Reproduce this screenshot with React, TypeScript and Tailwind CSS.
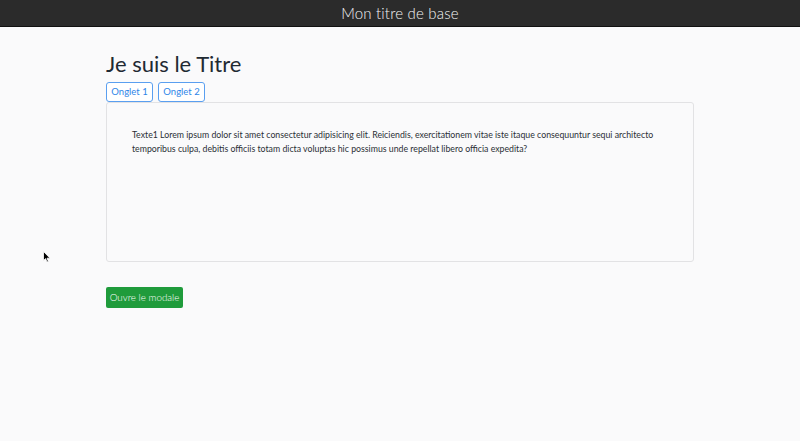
export default function App() {
  return (
    <div className="min-h-[441px] bg-[#fafafb] relative" style={{ fontFamily: "Lato, 'Noto Sans', sans-serif" }}>
      <header className="h-[27px] bg-[#2b2b2b] border-b border-[#111] flex items-center justify-center">
        <span className="text-[15px] font-light text-[#f5f5f5] leading-none tracking-[0.2px]">Mon titre de base</span>
      </header>
      <main className="w-[588px] ml-[106px] pt-[23px]">
        <h1 className="text-[22px] text-[#1f2a33] leading-[28px] font-normal">Je suis le Titre</h1>
        <div className="flex gap-[5px] mt-[4px]">
          <button className="h-[20px] w-[47px] text-[9.5px] text-[#2f86e8] border border-[#5a9ff0] rounded-[3px] bg-white leading-none">Onglet 1</button>
          <button className="h-[20px] w-[47px] text-[9.5px] text-[#2f86e8] border border-[#5a9ff0] rounded-[3px] bg-white leading-none">Onglet 2</button>
        </div>
        <div className="h-[160px] border border-[#e2e2e4] rounded-[3px] bg-[#fafafb] pt-[25px] pl-[25px] pr-[26px]">
          <p className="text-[8.75px] leading-[14px] text-[#2b3036]">
            Texte1 Lorem ipsum dolor sit amet consectetur adipisicing elit. Reiciendis, exercitationem vitae iste itaque consequuntur sequi architecto temporibus culpa, debitis officiis totam dicta voluptas hic possimus unde repellat libero officia expedita?
          </p>
        </div>
        <button className="mt-[25px] h-[21px] w-[77px] bg-[#1f9b3b] rounded-[2px] text-white text-[9.8px] font-light leading-none">Ouvre le modale</button>
      </main>
      <svg className="absolute left-[43px] top-[251px]" width="8" height="12" viewBox="0 0 8 12">
        <path d="M0.5 0.5 L0.5 9.5 L2.6 7.6 L4 11 L5.4 10.4 L4 7.2 L7 7.2 Z" fill="#000" stroke="#fff" strokeWidth="0.8" />
      </svg>
    </div>
  );
}
